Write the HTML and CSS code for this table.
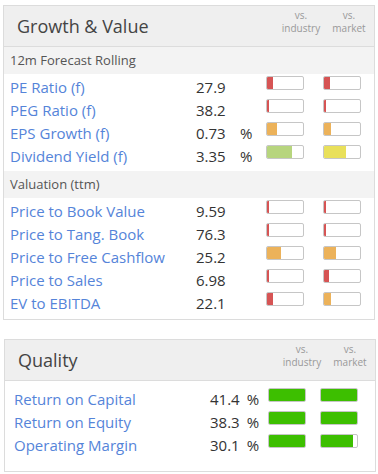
FILE: index.html
```html
<!DOCTYPE html>
<html>
<head>
<meta charset="utf-8">
<link rel="stylesheet" href="styles.css">
</head>
<body>
<div class="page">
  <section class="card card-gv">
    <header class="card-head">
      <h2 class="title">Growth &amp; Value</h2>
      <div class="vs"><span>vs.</span><span>industry</span></div>
      <div class="vs"><span>vs.</span><span>market</span></div>
    </header>
    <div class="sub">12m Forecast Rolling</div>
    <div class="rows rows-a">
      <div class="row"><span class="lbl">PE Ratio (f)</span><span class="val">27.9</span><span class="pct"></span><span class="bar"><i class="red" style="width:6px"></i></span><span class="bar b2"><i class="red" style="width:6px"></i></span></div>
      <div class="row"><span class="lbl">PEG Ratio (f)</span><span class="val">38.2</span><span class="pct"></span><span class="bar"><i class="red" style="width:2px"></i></span><span class="bar b2"><i class="red" style="width:2px"></i></span></div>
      <div class="row"><span class="lbl">EPS Growth (f)</span><span class="val">0.73</span><span class="pct">%</span><span class="bar"><i class="org" style="width:10px"></i></span><span class="bar b2"><i class="org" style="width:7px"></i></span></div>
      <div class="row"><span class="lbl">Dividend Yield (f)</span><span class="val">3.35</span><span class="pct">%</span><span class="bar"><i class="lgr" style="width:25px"></i></span><span class="bar b2"><i class="yel" style="width:22px"></i></span></div>
    </div>
    <div class="sub">Valuation (ttm)</div>
    <div class="rows rows-b">
      <div class="row"><span class="lbl">Price to Book Value</span><span class="val">9.59</span><span class="pct"></span><span class="bar"><i class="red" style="width:2px"></i></span><span class="bar b2"><i class="red" style="width:2px"></i></span></div>
      <div class="row"><span class="lbl">Price to Tang. Book</span><span class="val">76.3</span><span class="pct"></span><span class="bar"><i class="red" style="width:2px"></i></span><span class="bar b2"><i class="red" style="width:2px"></i></span></div>
      <div class="row"><span class="lbl">Price to Free Cashflow</span><span class="val">25.2</span><span class="pct"></span><span class="bar"><i class="org" style="width:14px"></i></span><span class="bar b2"><i class="org" style="width:12px"></i></span></div>
      <div class="row"><span class="lbl">Price to Sales</span><span class="val">6.98</span><span class="pct"></span><span class="bar"><i class="red" style="width:2px"></i></span><span class="bar b2"><i class="red" style="width:5px"></i></span></div>
      <div class="row"><span class="lbl">EV to EBITDA</span><span class="val">22.1</span><span class="pct"></span><span class="bar"><i class="red" style="width:6px"></i></span><span class="bar b2"><i class="org" style="width:7px"></i></span></div>
    </div>
  </section>

  <section class="card card-q">
    <header class="card-head">
      <h2 class="title">Quality</h2>
      <div class="vs"><span>vs.</span><span>industry</span></div>
      <div class="vs"><span>vs.</span><span>market</span></div>
    </header>
    <div class="rows rows-q">
      <div class="row"><span class="lbl">Return on Capital</span><span class="val">41.4<span class="unit">%</span></span><span class="bar"><i class="grn" style="width:36px"></i></span><span class="bar b2"><i class="grn" style="width:36px"></i></span></div>
      <div class="row"><span class="lbl">Return on Equity</span><span class="val">38.3<span class="unit">%</span></span><span class="bar"><i class="grn" style="width:36px"></i></span><span class="bar b2"><i class="grn" style="width:36px"></i></span></div>
      <div class="row"><span class="lbl">Operating Margin</span><span class="val">30.1<span class="unit">%</span></span><span class="bar"><i class="grn" style="width:36px"></i></span><span class="bar b2"><i class="grn" style="width:32px"></i></span></div>
    </div>
  </section>
</div>
</body>
</html>
```

FILE: styles.css
```css
html, body {
  margin: 0;
  padding: 0;
  background: #fff;
}
body {
  font-family: "Open Sans", "DejaVu Sans", sans-serif;
  color: #333;
}
.page {
  padding: 5px 0 0 3px;
}
.card {
  width: 372px;
  box-sizing: border-box;
  border: 1px solid #dcdcdc;
  background: #fff;
}
.card-q {
  margin-top: 19px;
  margin-left: 1px;
}
.card-head {
  display: flex;
  align-items: center;
  height: 40px;
  background: #efefef;
  border-bottom: 1px solid #dcdcdc;
  padding-right: 1px;
}
.title {
  flex: 1;
  margin: 0;
  padding-left: 13px;
  font-size: 18px;
  font-weight: 400;
  color: #444;
  line-height: 24px;
}
.vs {
  width: 48px;
  display: flex;
  flex-direction: column;
  align-items: center;
  font-size: 10px;
  line-height: 13px;
  color: #999;
  margin-top: -9px;
}
.sub {
  height: 27px;
  line-height: 27px;
  background: #f3f3f3;
  font-size: 13px;
  color: #555;
  padding-left: 6px;
}
.rows-a { padding-bottom: 5px; }
.rows-b { padding-bottom: 6px; }
.rows-q { padding: 5px 0 16px; }
.row {
  display: flex;
  height: 23px;
  align-items: flex-start;
  padding-left: 6px;
}
.lbl {
  width: 186px;
  font-size: 15px;
  line-height: 26px;
  color: #5584d9;
  white-space: nowrap;
}
.val {
  width: 44px;
  font-size: 15px;
  line-height: 26px;
  color: #333;
}
.pct {
  width: 26px;
  font-size: 15px;
  line-height: 26px;
  color: #333;
}
.bar {
  width: 38px;
  height: 14px;
  box-sizing: border-box;
  border: 1px solid #c6c6c6;
  border-radius: 2px;
  margin-top: 2px;
  display: flex;
  overflow: hidden;
}
.bar i {
  display: block;
  height: 100%;
}
.b2 { margin-left: 19px; }
.card-q .row { padding-left: 9px; }
.card-q .lbl { width: 196px; }
.card-q .val { width: 49px; text-align: right; margin-right: 9px; }
.card-q .unit { margin-left: 7px; }
.card-q .b2 { margin-left: 14px; }
.red { background: #d65454; }
.org { background: #ecb25a; }
.lgr { background: #b7d57e; }
.yel { background: #e9e05a; }
.grn { background: #3dbf00; }
```
